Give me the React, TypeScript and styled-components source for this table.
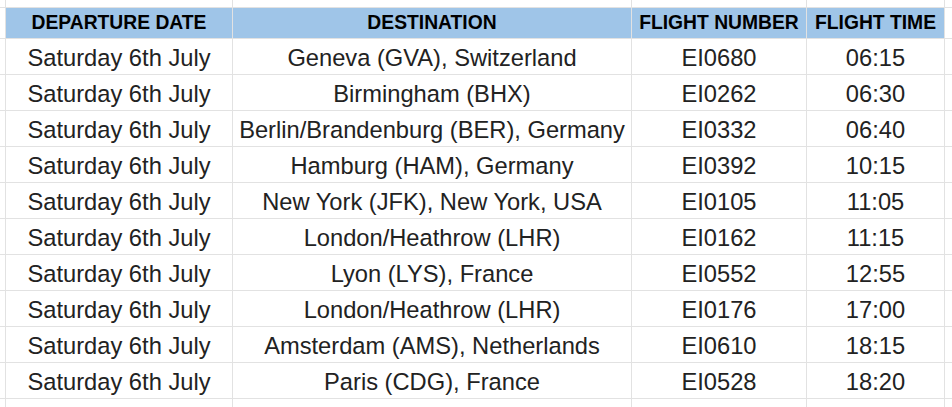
import React from "react";
import styled, { createGlobalStyle } from "styled-components";

const Global = createGlobalStyle`
  html, body { margin: 0; padding: 0; background: #fff; }
  body { font-family: "Liberation Sans", Arial, sans-serif; }
`;

const Sheet = styled.div`
  display: grid;
  grid-template-columns: 5px 226px 398px 174px 137px 1fr;
  grid-template-rows: 7px 30px repeat(10, 35px) 1fr;
  gap: 1px;
  background: #e2e2e2;
  width: 952px;
  height: 407px;
  overflow: hidden;
`;

const Cell = styled.div`
  background: #fff;
  color: #222;
  font-size: 23.7px;
  display: flex;
  align-items: center;
  justify-content: center;
  white-space: nowrap;
  overflow: hidden;
  padding-top: 4px;
`;

const HeadCell = styled.div<{ $filled?: boolean }>`
  background: ${(p) => (p.$filled ? "#9fc5e8" : "#fff")};
  color: #000;
  font-weight: 700;
  font-size: 19.3px;
  display: flex;
  align-items: center;
  justify-content: center;
  white-space: nowrap;
  overflow: hidden;
`;

const Blank = styled.div`
  background: #fff;
`;

const rows = [
  ["Geneva (GVA), Switzerland", "EI0680", "06:15"],
  ["Birmingham (BHX)", "EI0262", "06:30"],
  ["Berlin/Brandenburg (BER), Germany", "EI0332", "06:40"],
  ["Hamburg (HAM), Germany", "EI0392", "10:15"],
  ["New York (JFK), New York, USA", "EI0105", "11:05"],
  ["London/Heathrow (LHR)", "EI0162", "11:15"],
  ["Lyon (LYS), France", "EI0552", "12:55"],
  ["London/Heathrow (LHR)", "EI0176", "17:00"],
  ["Amsterdam (AMS), Netherlands", "EI0610", "18:15"],
  ["Paris (CDG), France", "EI0528", "18:20"],
];

export default function App() {
  return (
    <>
      <Global />
      <Sheet>
        {Array.from({ length: 6 }).map((_, i) => (
          <Blank key={"top" + i} />
        ))}
        <Blank />
        <HeadCell $filled>DEPARTURE DATE</HeadCell>
        <HeadCell $filled>DESTINATION</HeadCell>
        <HeadCell $filled>FLIGHT NUMBER</HeadCell>
        <HeadCell $filled>FLIGHT TIME</HeadCell>
        <Blank />
        {rows.map((r, i) => (
          <React.Fragment key={i}>
            <Blank />
            <Cell>Saturday 6th July</Cell>
            <Cell>{r[0]}</Cell>
            <Cell>{r[1]}</Cell>
            <Cell>{r[2]}</Cell>
            <Blank />
          </React.Fragment>
        ))}
        {Array.from({ length: 6 }).map((_, i) => (
          <Blank key={"bot" + i} />
        ))}
      </Sheet>
    </>
  );
}
